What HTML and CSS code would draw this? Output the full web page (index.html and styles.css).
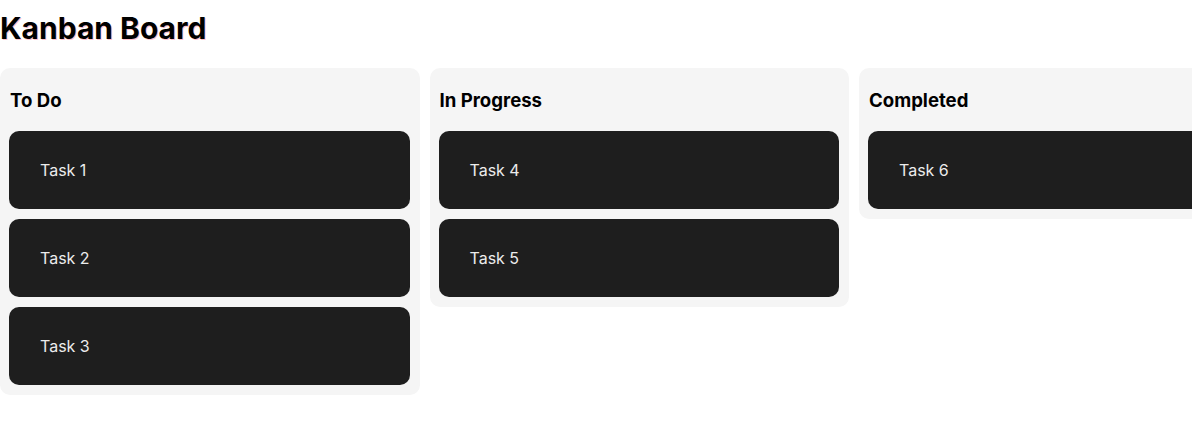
FILE: index.html
```html
<!DOCTYPE html>
<html>
<head>
<meta charset="utf-8">
<link rel="stylesheet" href="styles.css">
</head>
<body>
<h1 class="title">Kanban Board</h1>
<div class="board">
  <section class="column">
    <h3 class="column-title">To Do</h3>
    <div class="cards">
      <div class="card">Task 1</div>
      <div class="card">Task 2</div>
      <div class="card">Task 3</div>
    </div>
  </section>
  <section class="column">
    <h3 class="column-title">In Progress</h3>
    <div class="cards">
      <div class="card">Task 4</div>
      <div class="card">Task 5</div>
    </div>
  </section>
  <section class="column">
    <h3 class="column-title">Completed</h3>
    <div class="cards">
      <div class="card">Task 6</div>
    </div>
  </section>
</div>
</body>
</html>
```
FILE: styles.css
```css
html, body {
  margin: 0;
  padding: 0;
  background: #ffffff;
  overflow: hidden;
}
body {
  font-family: Inter, "Liberation Sans", sans-serif;
  color: #000;
}
.title {
  margin: 10px 0 22px 0;
  font-size: 30px;
  font-weight: 700;
  line-height: 36px;
  text-shadow: 1px 1px 0 #ffc0cb;
}
.board {
  display: flex;
  gap: 10px;
  align-items: flex-start;
}
.column {
  flex: 0 0 419.5px;
  box-sizing: border-box;
  background: #f5f5f5;
  border-radius: 10px;
  padding: 10px 10px 10px 9px;
}
.column-title {
  margin: 11px 0 19px 1px;
  font-size: 18.6px;
  font-weight: 700;
  line-height: 23px;
}
.cards {
  display: flex;
  flex-direction: column;
  gap: 10px;
}
.card {
  background: #1e1e1e;
  color: #ececec;
  border-radius: 10px;
  padding: 30px 31px;
  font-size: 16px;
  line-height: 18px;
}
```
